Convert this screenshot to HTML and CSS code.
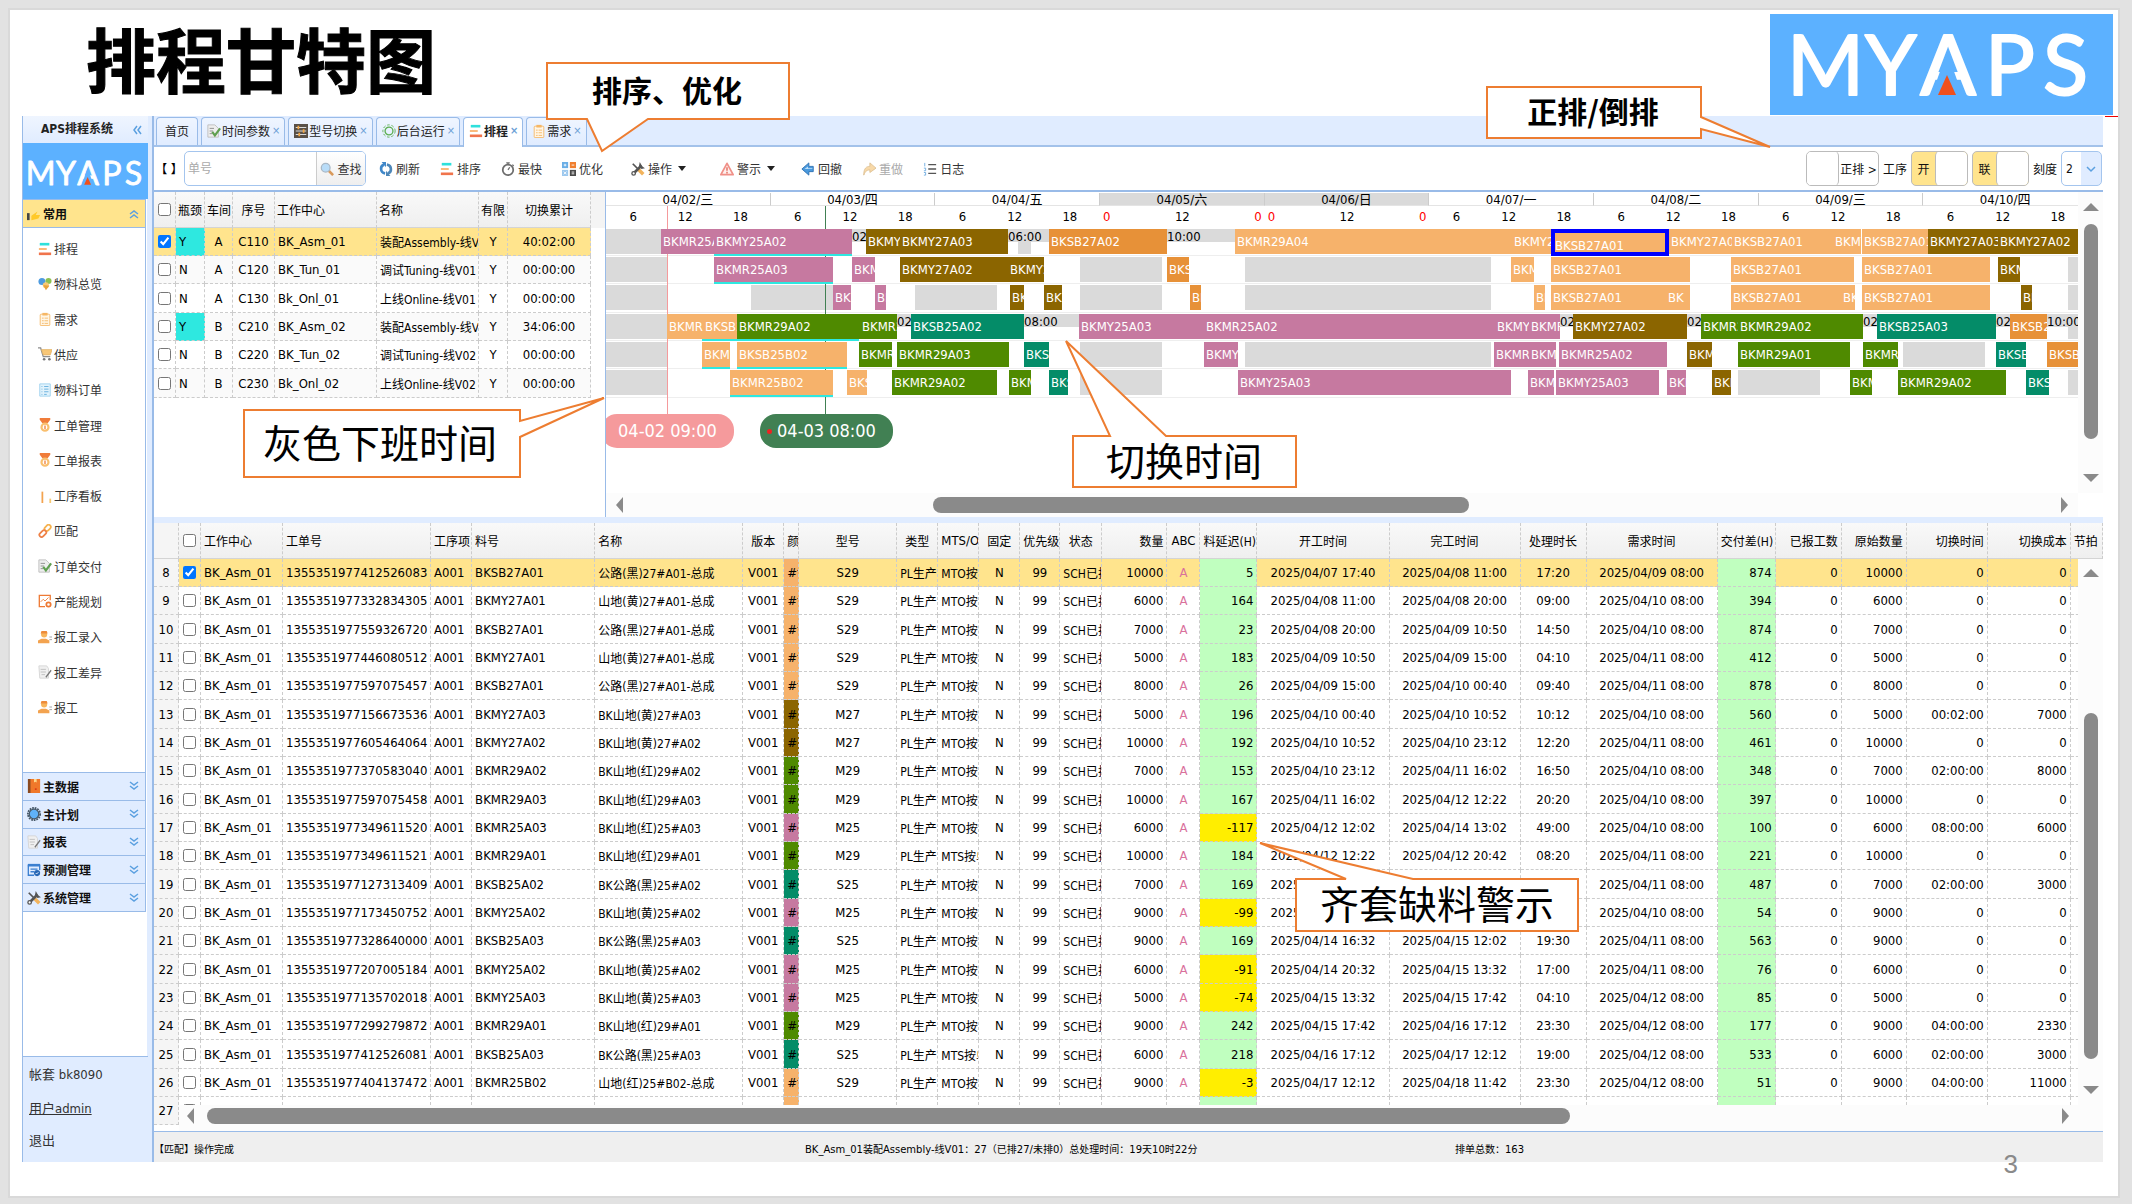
FILE: index.html
```html
<!DOCTYPE html>
<html lang="zh-CN">
<head>
    <meta charset="UTF-8">
    <title>排程甘特图</title>
    <link rel="stylesheet" href="styles.css">
</head>
<body>
<!-- 图标 -->
<svg class="sprite" width="0" height="0">
    <symbol id="i-sched" viewBox="0 0 16 16"><path d="M2 1h11v3H2z" fill="#2ee0dc"/><path d="M1 7h9v2H1z" fill="#f9b06a"/><path d="M1 12h14v3H1z" fill="#f0744c"/></symbol>
    <symbol id="i-over" viewBox="0 0 16 16"><circle cx="4.500" cy="5" r="4" fill="#4d9be0"/><circle cx="12" cy="4.500" r="3.500" fill="#8cc152"/><circle cx="9" cy="9.500" r="3.500" fill="#f7c873"/><path d="M6 9l3 6 4-5z" fill="#e8a33d"/></symbol>
    <symbol id="i-clip" viewBox="0 0 16 16"><rect x="2.500" y="2.500" width="11" height="13" rx="1" fill="#fff6e6" stroke="#f6b765"/><path d="M5 1h6v3H5z" fill="#f6b765"/><path d="M4.500 7h2m1 0h4m-7 3h2m1 0h4m-7 3h2m1 0h4" stroke="#f6b765" fill="none"/></symbol>
    <symbol id="i-cart" viewBox="0 0 16 16"><path d="M0 1h3l3 10h8" fill="none" stroke="#8d8d8d" stroke-width="1.500"/><path d="M4 3h12l-2 6H6z" fill="#f8c777" stroke="#e5b568"/><circle cx="7" cy="14" r="1.500" fill="#777"/><circle cx="13" cy="14" r="1.500" fill="#777"/></symbol>
    <symbol id="i-doc" viewBox="0 0 16 16"><path d="M2 1h12v14H2z" fill="#e2f3fc" stroke="#9ad0ee"/><path d="M4 4h1m2 0h5M4 7h1m2 0h5M4 10h1m2 0h5M4 13h1m2 0h3" stroke="#5fabdc"/></symbol>
    <symbol id="i-medal" viewBox="0 0 16 16"><path d="M2 0h12v2l-3 4H5L2 2z" fill="#f07c3a"/><circle cx="8" cy="10.500" r="4" fill="#fff" stroke="#f9bf6e" stroke-width="2.500"/><path d="M8 8.500v4" stroke="#f07c3a" stroke-width="1.500"/></symbol>
    <symbol id="i-board" viewBox="0 0 16 16"><path d="M4 3h2v13H4z" fill="#f3a34f"/><path d="M13 11h2v5h-2z" fill="#f7c873"/></symbol>
    <symbol id="i-link" viewBox="0 0 16 16"><g fill="none" stroke-width="2"><rect x="7" y="2" width="8" height="5" rx="2.500" transform="rotate(-45 11 4.500)" stroke="#f6b24e"/><rect x="1" y="8.500" width="9" height="5" rx="2.500" transform="rotate(-45 5.500 11)" stroke="#ee8147"/></g></symbol>
    <symbol id="i-check" viewBox="0 0 16 16"><path d="M1 1h8l4 4v10H1z" fill="#eee" stroke="#bbb"/><path d="M3 5h5M3 8h4M3 11h3" stroke="#888"/><path d="M6 9l3 4 6-8" fill="none" stroke="#5f9f50" stroke-width="2.500"/></symbol>
    <symbol id="i-plan" viewBox="0 0 16 16"><path d="M14 7V1.500H1.500v13H8" fill="none" stroke="#ee7a35" stroke-width="1.500"/><path d="M3 9l3-3 2 2 4-4" fill="none" stroke="#ee7a35"/><circle cx="12" cy="12" r="2.500" fill="none" stroke="#ee7a35" stroke-width="2"/></symbol>
    <symbol id="i-man" viewBox="0 0 16 16"><circle cx="7" cy="5" r="3.500" fill="#f8b55c"/><path d="M3 4h8l-1-3H4z" fill="#ee8b3a"/><path d="M0 15v-3l4-2h5l4 2v3z" fill="#f3a34f"/><path d="M13 8h3M13 11h3" stroke="#999"/></symbol>
    <symbol id="i-pen" viewBox="0 0 16 16"><path d="M1 1h9l2 3v11H2z" fill="#f0f0f0" stroke="#d4d4d4"/><path d="M3 5h6M3 8h6M4 11h4" stroke="#bbb"/><path d="M9 14l6-8" stroke="#777" stroke-width="1.500"/></symbol>
    <symbol id="i-book" viewBox="0 0 16 16"><path d="M1 0h4v16H1z" fill="#8a4a20"/><path d="M4 0h11v16H4z" fill="#f0782a"/><path d="M8 0h3v4l-1.500-1L8 4z" fill="#ffd98a"/><path d="M9 11h2v1H9z" fill="#c00"/></symbol>
    <symbol id="i-gear" viewBox="0 0 16 16"><circle cx="8" cy="8" r="7" fill="none" stroke="#455766" stroke-width="2" stroke-dasharray="2 1"/><circle cx="8" cy="8" r="5.500" fill="#5fb2f8" stroke="#455766" stroke-width="1.500"/></symbol>
    <symbol id="i-cal" viewBox="0 0 16 16"><path d="M1 1h14v3H1z" fill="#3a7fd0"/><path d="M1.500 2v12H8m6.500-6V2M4 7h8M4 10h4" fill="none" stroke="#3a7fd0" stroke-width="1.500"/><circle cx="11.500" cy="11.500" r="3.500" fill="#2767b5"/><path d="M10 11.500l1 1 2-2" stroke="#fff" fill="none"/></symbol>
    <symbol id="i-tools" viewBox="0 0 16 16"><path d="M2 2l6 6" stroke="#555" stroke-width="2"/><path d="M8 8l6 6" stroke="#f2b35c" stroke-width="4"/><path d="M12 4L4 12" stroke="#555" stroke-width="3"/><path d="M10 0L9 5l3 3 4-1-3-2z" fill="#555"/><circle cx="3" cy="13" r="2" fill="#fff" stroke="#555" stroke-width="1.500"/></symbol>
    <symbol id="i-find" viewBox="0 0 16 16"><path d="M10 10l5 5" stroke="#d99a5b" stroke-width="3"/><circle cx="6.500" cy="6.500" r="5" fill="#b8dcf8" stroke="#a9b8c6" stroke-width="1.500"/></symbol>
    <symbol id="i-fresh" viewBox="0 0 16 16"><path d="M7 13C1 12 1 4 6 3" fill="none" stroke="#3f87c9" stroke-width="3"/><path d="M3 0h5v6z" fill="#3f87c9"/><path d="M9 3c6 1 6 9 1 10" fill="none" stroke="#4d86b8" stroke-width="3"/><path d="M13 16H8v-6z" fill="#4d86b8"/></symbol>
    <symbol id="i-clock" viewBox="0 0 16 16"><circle cx="8" cy="9" r="6" fill="#fff" stroke="#6d6d6d" stroke-width="2"/><path d="M6 1h4M8 1v2M8 9l2-3M13 3l1.500 1.500" stroke="#6d6d6d" stroke-width="1.500"/></symbol>
    <symbol id="i-opt" viewBox="0 0 16 16"><path d="M0 0h7v7H0z" fill="#6aaee6"/><path d="M9 0h7v7H9z" fill="#f08030"/><path d="M0 9h7v7H0z" fill="#9cc8ee"/><path d="M9 9h7v7H9z" fill="#4a4a4a"/><path d="M3.500 2v3M2 3.500h3m6 0h3M2 11l3 3m0-3l-3 3m9-2.500h3m-3 2h3" stroke="#fff"/></symbol>
    <symbol id="i-warn" viewBox="0 0 16 16"><path d="M8 1.500L15 14.500H1z" fill="#fff0ee" stroke="#f09088" stroke-width="2" stroke-linejoin="round"/><path d="M8 6v4m0 1v2" stroke="#e0604f" stroke-width="1.500"/></symbol>
    <symbol id="i-back" viewBox="0 0 16 16"><path d="M1 8l8-7v4h5v6H9v4z" fill="#4a9ade" stroke="#2c6fb0"/><path d="M4 8l4-3v2h5v1z" fill="#bfe0fa"/></symbol>
    <symbol id="i-redo" viewBox="0 0 16 16"><path d="M2 15C2 7 5 5 9 5V1l7 6-7 5V9C6 9 4 10 2 15z" fill="#f8d9a8" stroke="#ddc094"/></symbol>
    <symbol id="i-log" viewBox="0 0 16 16"><path d="M6 3h9M6 8h9M6 13h9" stroke="#555" stroke-width="1.500"/><path d="M2 1v4M1 7h2v3H1m0 2h2v3H1" stroke="#69a9e0" fill="none"/></symbol>
    <symbol id="i-slide" viewBox="0 0 16 16"><path d="M0 0h16v16H0z" fill="#585048"/><path d="M2 4h12M2 8h12M2 12h12" stroke="#eee"/><path d="M4 2h2v4H4zm6 4h2v4h-2zm-5 4h2v4H5z" fill="#f5a742"/></symbol>
    <symbol id="i-run" viewBox="0 0 16 16"><circle cx="8" cy="8" r="4.500" fill="none" stroke="#5aae4e" stroke-width="1.500"/><circle cx="8" cy="8" r="7" fill="none" stroke="#5aae4e" stroke-dasharray="3 2"/></symbol>
    <symbol id="i-hand" viewBox="0 0 16 16"><path d="M0 7h3v8H0z" fill="#444"/><path d="M5 10l7-5-2 4h5l-2 4-8 2z" fill="#ffc928"/></symbol>
    <symbol id="i-down" viewBox="0 0 10 10"><path d="M1 1l4 3 4-3M1 5l4 3 4-3" fill="none" stroke="#5ba0e0" stroke-width="1.500"/></symbol>
    <symbol id="i-up" viewBox="0 0 10 10"><path d="M1 5l4-3 4 3M1 9l4-3 4 3" fill="none" stroke="#5ba0e0" stroke-width="1.500"/></symbol>
    <symbol id="i-left" viewBox="0 0 10 10"><path d="M5 1L2 5l3 4M9 1L6 5l3 4" fill="none" stroke="#5ba0e0" stroke-width="1.500"/></symbol>
    <symbol id="i-logo" viewBox="0 0 343 101">
        <text class="logo-text" y="81" x="17 95 150 215 273">MYAPS</text>
        <path d="M177 38l-14 39h28z" fill="#5cb1ff"/>
        <path d="M177 61l-9 20h18z" fill="#f0501c"/>
    </symbol>
</svg>

<div class="slide">
    <header class="top">
        <h1>排程甘特图</h1>
        <svg class="brand"><use href="#i-logo"/></svg>
    </header>

    <div class="app">
        <aside class="side">
            <div class="side-title">APS排程系统<svg class="chev"><use href="#i-left"/></svg></div>
            <svg class="side-logo" viewBox="10 0 323 101"><use href="#i-logo" width="343" height="101"/></svg>
            <nav class="menu">
                <button class="acc open"><svg class="ico"><use href="#i-hand"/></svg>常用<svg class="chev"><use href="#i-up"/></svg></button>
                <div class="links" id="links"></div>
                <div class="groups" id="groups"></div>
            </nav>
            <div class="user">
                <span>帐套 bk8090</span>
                <a href="#" class="line">用户admin</a>
                <a href="#">退出</a>
            </div>
        </aside>

        <main class="main">
            <div class="tabs">
                <button class="tab home">首页</button>
                <button class="tab"><svg class="ico"><use href="#i-check"/></svg>时间参数<i>×</i></button>
                <button class="tab"><svg class="ico"><use href="#i-slide"/></svg>型号切换<i>×</i></button>
                <button class="tab"><svg class="ico"><use href="#i-run"/></svg>后台运行<i>×</i></button>
                <button class="tab on"><svg class="ico"><use href="#i-sched"/></svg>排程<i>×</i></button>
                <button class="tab"><svg class="ico"><use href="#i-clip"/></svg>需求<i>×</i></button>
            </div>

            <div class="toolbar">
                <span class="mark">【 】</span>
                <div class="search">
                    <input type="text" placeholder="单号" aria-label="单号">
                    <button><svg class="ico"><use href="#i-find"/></svg>查找</button>
                </div>
                <div class="tools">
                    <button><svg class="ico"><use href="#i-fresh"/></svg>刷新</button>
                    <button><svg class="ico"><use href="#i-sched"/></svg>排序</button>
                    <button><svg class="ico"><use href="#i-clock"/></svg>最快</button>
                    <button><svg class="ico"><use href="#i-opt"/></svg>优化</button>
                    <button class="drop"><svg class="ico"><use href="#i-tools"/></svg>操作</button>
                    <button class="drop"><svg class="ico"><use href="#i-warn"/></svg>警示</button>
                    <button><svg class="ico"><use href="#i-back"/></svg>回撤</button>
                    <button disabled><svg class="ico"><use href="#i-redo"/></svg>重做</button>
                    <button><svg class="ico"><use href="#i-log"/></svg>日志</button>
                </div>
                <div class="opts">
                    <button class="switch wide"><b></b><span>正排 &gt;</span></button>
                    <span>工序</span>
                    <button class="switch"><span>开</span><b></b></button>
                    <button class="switch"><span>联</span><b></b></button>
                    <label for="scale">刻度</label>
                    <div class="combo">
                        <select id="scale"><option>2</option></select>
                        <svg viewBox="0 0 10 10"><path d="M1 3l4 4 4-4" fill="none" stroke="#5ba0e0" stroke-width="1.500"/></svg>
                    </div>
                </div>
            </div>

            <section class="gantt">
                <div class="centers">
                    <table id="centers">
                        <colgroup><col class="w22"><col class="w29"><col class="w28"><col class="w42"><col class="w102"><col class="w102"><col class="w29"><col class="w83"></colgroup>
                        <thead><tr><th><input type="checkbox" aria-label="全选"></th><th>瓶颈</th><th>车间</th><th>序号</th><th class="l">工作中心</th><th class="l">名称</th><th>有限</th><th>切换累计</th></tr></thead>
                        <tbody></tbody>
                    </table>
                </div>
                <div class="chart">
                    <div class="canvas">
                        <div class="days" id="days"></div>
                        <div class="lanes" id="lanes"></div>
                        <div class="stem pink"></div>
                        <div class="stem green"></div>
                        <div class="pill pink">04-02 09:00</div>
                        <div class="pill green">04-03 08:00</div>
                    </div>
                    <div class="hbar"><i class="al"></i><div class="track"><div class="thumb"></div></div><i class="ar"></i></div>
                </div>
                <div class="vbar"><i class="au"></i><div class="track"><div class="thumb"></div></div><i class="ad"></i></div>
            </section>

            <section class="orders">
                <table id="orders">
                    <colgroup></colgroup>
                    <thead><tr></tr></thead>
                    <tbody></tbody>
                </table>
                <div class="vbar"><i class="au"></i><div class="track"><div class="thumb"></div></div><i class="ad"></i></div>
                <div class="hbar"><i class="al"></i><div class="track"><div class="thumb"></div></div><i class="ar"></i></div>
            </section>

            <footer class="status">
                <span>【匹配】操作完成</span>
                <span>BK_Asm_01装配Assembly-线V01：27（已排27/未排0）总处理时间：19天10时22分</span>
                <span>排单总数：163</span>
            </footer>
        </main>
    </div>
    <div class="redline"></div>
    <div class="page-no">3</div>

    <!-- 标注 -->
    <svg class="notes">
        <g class="shape">
            <path d="M537 53h242v56H638L592 141 577 109H537z"/>
            <path d="M1477 77h214v30l69 30-69-18v9h-214z"/>
            <path d="M234 400h276v11l84-23-84 39v40H234z"/>
            <path d="M1063 426h37l-44-95 100 95h130v51h-223z"/>
            <path d="M1286 869h50l-86-36 153 36h165v52h-282z"/>
        </g>
        <g class="small">
            <text x="657" y="92">排序、优化</text>
            <text x="1583" y="113">正排/倒排</text>
        </g>
        <g class="large">
            <text x="370" y="448">灰色下班时间</text>
            <text x="1174" y="466">切换时间</text>
            <text x="1427" y="909">齐套缺料警示</text>
        </g>
    </svg>
</div>
<script src="script.js"></script>
</body>
</html>
```

FILE: styles.css
```css
*{margin: 0;padding: 0;box-sizing: border-box;}
body{padding: 10px 14px 8px 10px;background: #e2e2e2;font: 13px "DejaVu Sans Condensed","Noto Sans","Noto Sans CJK SC",sans-serif;color: #000;}
button,input,select{font: inherit;color: inherit;background: none;border: 0;}
a{color: inherit;text-decoration: none;}
i{font-style: normal;}
table{border-collapse: separate;border-spacing: 0;table-layout: fixed;width: 100%;}
.sprite{position: absolute;}
.ico{width: 14px;height: 14px;flex: none;}
.chev{width: 10px;height: 10px;flex: none;}

.slide{position: relative;min-height: calc(100vh - 18px);background: #fff;box-shadow: 0 0 0 2px #d9d9d9;}
.top{height: 106px;display: flex;justify-content: space-between;padding: 4px 5px 0 76px;}
.top h1{font-family: "Noto Sans CJK SC",sans-serif;font-size: 70px;line-height: 88px;font-weight: bold;-webkit-text-stroke: 1px #000;}
.brand{width: 343px;height: 101px;background: #5cb1ff;}
.logo-text{font-family: Lato,sans-serif;font-size: 83px;fill: #fff;stroke: #fff;stroke-width: 2px;stroke-linejoin: round;}
.redline{position: absolute;right: 0;top: 106px;width: 13px;height: 1px;background: #e00;}
.page-no{position: absolute;right: 100px;bottom: 16px;font: 26px/32px "Liberation Sans",sans-serif;color: #8a8a8a;}

.app{margin: 0 15px 0 12px;display: grid;grid-template-columns: 130px 1fr;background: #e0ecff;}

/* 左侧菜单 */
.side{display: flex;flex-direction: column;width: 126px;border-left: 1px solid #99bbe8;font-size: 12px;color: #333;}
.side-title{height: 27px;line-height: 27px;padding: 0 6px 0 18px;font-weight: bold;color: #222;background: linear-gradient(#eff5ff,#e0ecff);display: flex;align-items: center;justify-content: space-between;}
.side-logo{width: 125px;height: 56px;padding-top: 4px;background: #5cb1ff;}
.menu{flex: 1;background: #fff;margin-right: 1px;}
.acc{display: flex;align-items: center;width: 123px;padding: 0 6px 0 4px;gap: 2px;font-weight: bold;color: #111;background: #e0ecff;border: solid #99bbe8;border-width: 0 1px 1px 0;}
.acc .chev{margin-left: auto;}
.acc.open{height: 29px;background: #ffe48d;border-top-width: 1px;}
.links{width: 123px;height: 545px;padding: 3px 0 47px;display: grid;grid-auto-rows: 1fr;border: solid #99bbe8;border-width: 0 1px 1px 0;}
.links a{display: flex;align-items: center;gap: 2px;padding-left: 15px;}
.groups{height: 139px;display: grid;grid-auto-rows: 1fr;}
.user{height: 106px;border-top: 1px solid #99bbe8;padding: 0 0 8px 6px;display: grid;grid-template-rows: 33px 34px 1fr;align-items: center;font-size: 13px;}
.user .line{text-decoration: underline;}

.main{border-left: 2px solid #99bbe8;min-width: 0;}
.tabs{height: 31px;border-bottom: 2px solid #a3c2ea;display: flex;align-items: flex-end;gap: 3px;padding-left: 2px;}
.tab{height: 28px;display: flex;align-items: center;gap: 1px;padding: 0 4px 2px 5px;font-size: 12px;color: #222;border: 1px solid #99bbe8;border-bottom: 0;border-radius: 4px 4px 0 0;background: linear-gradient(#eff5ff,#e0ecff);}
.tab.home{padding: 0 8px 2px;}
.tab i{color: #6b9fd6;font-size: 11px;padding-left: 1px;}
.tab.on{height: 30px;padding-bottom: 4px;margin-bottom: -2px;background: #fff;font-weight: bold;}

.toolbar{height: 45px;border-bottom: 2px solid #99bbe8;background: #fff;display: flex;align-items: center;font-size: 12px;color: #333;}
.toolbar button{display: flex;align-items: center;gap: 3px;}
.mark{width: 30px;text-align: center;white-space: nowrap;color: #000;}
.search{display: flex;width: 182px;height: 35px;border: 1px solid #a4c5ee;border-radius: 5px;overflow: hidden;}
.search input{width: 131px;padding-left: 3px;}
.search input::placeholder{color: #aaa;}
.search button{flex: 1;justify-content: center;background: linear-gradient(#fff,#eee);border-left: 1px solid #ccc;}
.tools{display: flex;gap: 20px;padding-left: 13px;}
.tools .drop{margin: 0 6px 0 8px;}
.drop:after{content: "";border: 4px solid transparent;border-top: 5px solid #222;border-bottom: 0;margin-left: 3px;}
.tools button:disabled{color: #aaa;}
.opts{margin-left: auto;display: flex;align-items: center;gap: 4px;padding-right: 1px;color: #111;}
.toolbar .switch{width: 57px;height: 35px;border: 1px solid #bbb;border-radius: 5px;gap: 0;overflow: hidden;background: #ffe48d;}
.switch span{flex: 1;text-align: center;white-space: nowrap;}
.switch b{width: 32px;height: 35px;background: #fff;border-left: 1px solid #bbb;border-radius: 5px;}
.toolbar .wide{width: 73px;background: #fff;}
.wide b{border: 0;border-right: 1px solid #bbb;}
.combo{position: relative;width: 41px;height: 35px;border: 1px solid #a4c5ee;border-radius: 5px;overflow: hidden;background: linear-gradient(90deg,#fff 19px,#e0ecff 19px);}
.combo select{width: 100%;height: 100%;padding-left: 4px;appearance: none;}
.combo svg{position: absolute;right: 5px;top: 12px;width: 10px;height: 10px;pointer-events: none;}

/* 表格公共 */
th,td{overflow: hidden;white-space: nowrap;padding: 0 3px;border: dashed #ccc;border-width: 0 1px 1px 0;text-align: center;}
th{height: 36px;font-size: 12px;font-weight: normal;background: linear-gradient(#f9f9f9,#efefef);border-bottom: 1px solid #d4d4d4;}
tbody tr{height: 28px;}
tbody tr:nth-child(3n){height: 29px;}
tr.sel td{background: #ffe48d;}
.l{text-align: left;}
.r{text-align: right;}
.cn{font-size: 12px;}
input[type=checkbox]{width: 13px;height: 13px;display: block;margin: 0 auto;}
th:has(input),td:has(input){padding: 0;}

/* 甘特图 */
.gantt{height: 325px;display: grid;grid-template-columns: 452px 1fr 25px;background: #fff;overflow: hidden;}
.centers{border-right: 1px solid #99bbe8;background: linear-gradient(#f4f4f4 36px,#fff 36px);}
.centers table{width: 437px;}
.centers th{padding: 0 2px;}
.centers tbody tr:nth-child(even) td{background: #fafafa;}
.centers tbody tr td.neck{background: #2ee8e0;}
.w22{width: 22px;}
.w28{width: 28px;}
.w29{width: 29px;}
.w42{width: 42px;}
.w83{width: 83px;}
.w102{width: 102px;}
.chart{display: flex;flex-direction: column;justify-content: space-between;overflow: hidden;min-width: 0;}
.canvas{position: relative;height: 256px;margin-right: -10px;}
.days{display: grid;grid-template-columns: repeat(9,1fr);height: 36px;padding-top: 1px;text-align: center;}
.date{height: 13px;line-height: 13px;border-right: 1px solid #ccc;border-bottom: 1px solid #e4e4e4;}
.rest .date{background: #dadada;}
.hours{display: grid;grid-template-columns: 54fr 50fr 60fr;line-height: 22px;}
.rest .hours{display: flex;justify-content: space-between;padding: 0 3px;}
.red{color: #f00;}
.lane{position: relative;height: 28px;border-bottom: 1px solid #eee;}
.lane:nth-child(3n){height: 29px;}
.bar{position: absolute;top: 1px;height: 25px;line-height: 25px;padding-left: 2px;color: #fff;white-space: nowrap;overflow: hidden;z-index: 2;}
.off{background: #dadada;z-index: 0;}
.swap{height: 13px;line-height: 15px;padding: 0;color: #000;background: #dadada;}
.under{top: 26px;height: 2px;background: #2ee8e0;}
.p{background: #c679a0;}
.b{background: #8b6500;}
.o{background: #e79138;}
.y,tr.sel td.y{background: #f6b26b;}
.g{background: #4f8a00;}
.t{background: #048c68;}
.pick{height: 27px;line-height: 26px;border: 4px solid #00f;padding: 0;z-index: 3;}
.stem{position: absolute;top: 14px;height: 208px;width: 1px;z-index: 1;}
.pill{position: absolute;top: 222px;width: 133px;height: 34px;line-height: 34px;border-radius: 16px;text-align: center;font-size: 18px;color: #fff;}
.stem.pink{left: 61px;background: #f59a9c;}
.stem.green{left: 219px;background: #418053;}
.pill.pink{left: -5px;background: #f59a9c;}
.pill.green{left: 154px;background: #418053;}
.pill.green:before{content: "";position: absolute;left: 7px;top: 15px;width: 5px;height: 5px;border-radius: 50%;background: #e22;}

/* 滚动条 */
.hbar,.vbar{display: flex;align-items: center;background: #fcfcfc;}
.hbar{height: 24px;padding: 0 10px;gap: 13px;}
.vbar{flex-direction: column;padding: 11px 0;gap: 13px;}
.track{flex: 1;}
.hbar .thumb{height: 16px;border-radius: 8px;background: #8a8a8a;}
.vbar .thumb{width: 14px;border-radius: 8px;background: #8a8a8a;}
.al,.ar,.au,.ad{border: 8px solid transparent;}
.al{border-width: 8px 7px 8px 0;border-right-color: #8a8a8a;}
.ar{border-width: 8px 0 8px 7px;border-left-color: #8a8a8a;}
.au{border-width: 0 8px 8px;border-bottom-color: #8a8a8a;}
.ad{border-width: 8px 8px 0;border-top-color: #8a8a8a;}
.chart .thumb{width: 38%;margin-left: 21%;}
.gantt .vbar{height: 301px;}
.gantt .vbar .thumb{height: 215px;}

/* 工单表 */
.orders{position: relative;height: 615px;border-top: 6px solid #e0ecff;overflow: hidden;background: #fff;border-bottom: 1px solid #99bbe8;}
.orders .no{background: #f5f5f5;padding: 0;}
.orders .abc{color: #d9709c;}
.orders tbody .late{background: #c0ffbf;}
.orders tbody .lack{background: #ffee00;}
.orders .big{font-size: 13px;}
.orders .vbar{position: absolute;right: 0;top: 36px;bottom: 26px;width: 25px;padding: 10px 0 11px;}
.orders .vbar .track{display: flex;align-items: flex-end;padding-bottom: 14px;}
.orders .vbar .thumb{height: 346px;}
.orders .hbar{position: absolute;left: 25px;right: 0;bottom: 0;height: 26px;padding: 0 34px 4px 8px;}
.orders .hbar .thumb{width: 74%;}
.status{height: 30px;display: grid;grid-template-columns: 651px 650px 1fr;align-items: center;padding-top: 2px;background: #efefef;font: 10px "DejaVu Sans","Noto Sans CJK SC",sans-serif;}

/* 标注框 */
.notes{position: absolute;left: 0;top: 0;width: 100%;height: 100%;overflow: visible;pointer-events: none;z-index: 9;}
.shape{fill: #fff;stroke: #ed7d31;stroke-width: 2px;}
.notes text{font-family: "Noto Sans CJK SC",sans-serif;text-anchor: middle;}
.small{font-size: 30px;font-weight: bold;}
.large{font-size: 39px;}
```

FILE: script.js
```js
function $(id){
    return document.getElementById(id);
}
function icon(name, cls){
    return '<svg class="' + (cls || 'ico') + '"><use href="#i-' + name + '"/></svg>';
}

// 菜单
var links = [['sched','排程'],['over','物料总览'],['clip','需求'],['cart','供应'],['doc','物料订单'],['medal','工单管理'],['medal','工单报表'],
    ['board','工序看板'],['link','匹配'],['check','订单交付'],['plan','产能规划'],['man','报工录入'],['pen','报工差异'],['man','报工']];
$('links').innerHTML = links.map(function(m){
    return '<a href="#">' + icon(m[0]) + m[1] + '</a>';
}).join('');
var groups = [['book','主数据'],['gear','主计划'],['pen','报表'],['cal','预测管理'],['tools','系统管理']];
$('groups').innerHTML = groups.map(function(m){
    return '<button class="acc">' + icon(m[0]) + m[1] + icon('down','chev') + '</button>';
}).join('');

// 工作中心
var centers = [
    ['Y','A','C110','BK_Asm_01','装配Assembly-线V01','40:02:00'],
    ['N','A','C120','BK_Tun_01','调试Tuning-线V01','00:00:00'],
    ['N','A','C130','Bk_Onl_01','上线Online-线V01','00:00:00'],
    ['Y','B','C210','BK_Asm_02','装配Assembly-线V02','34:06:00'],
    ['N','B','C220','BK_Tun_02','调试Tuning-线V02','00:00:00'],
    ['N','B','C230','Bk_Onl_02','上线Online-线V02','00:00:00']
];
$('centers').tBodies[0].innerHTML = centers.map(function(c, i){
    return '<tr' + (i === 0 ? ' class="sel"' : '') + '><td><input type="checkbox" aria-label="' + c[3] + '"' + (i === 0 ? ' checked' : '') + '></td>' +
        '<td class="l' + (c[0] === 'Y' ? ' neck' : '') + '">' + c[0] + '</td><td>' + c[1] + '</td><td>' + c[2] + '</td><td class="l">' + c[3] +
        '</td><td class="l cn">' + c[4] + '</td><td>Y</td><td>' + c[5] + '</td></tr>';
}).join('');

// 日期刻度
var days = ['04/02/三','04/03/四','04/04/五','04/05/六','04/06/日','04/07/一','04/08/二','04/09/三','04/10/四'];
$('days').innerHTML = days.map(function(d){
    var rest = /[六日]/.test(d);
    return '<div class="' + (rest ? 'rest' : 'work') + '"><div class="date">' + d + '</div><div class="hours">' +
        (rest ? '<span class="red">0</span><span>12</span><span class="red">0</span>' : '<span>6</span><span>12</span><span>18</span>') + '</div></div>';
}).join('');

// 任务条: [类型, 开始, 结束, 文字]
var START = 606, SPAN = 1482;
var lanes = [
    [['off',606,661],['p',661,714,'BKMR25A03'],['p',714,852,'BKMY25A02'],['under',714,852],['swap',852,866,'02:00'],['b',866,900,'BKMY27A01'],['b',900,1008,'BKMY27A03'],
     ['swap',1008,1049,'06:00'],['off',1018,1031],['o',1049,1167,'BKSB27A02'],['swap',1167,1235,'10:00'],['y',1235,1512,'BKMR29A04'],['y',1512,1551,'BKMY27A01'],
     ['y pick',1551,1669,'BKSB27A01'],['y',1669,1732,'BKMY27A01'],['y',1732,1833,'BKSB27A01'],['y',1833,1861,'BKMY27A01'],['y',1862,1928,'BKSB27A01'],
     ['b',1928,1998,'BKMY27A03'],['b',1998,2078,'BKMY27A02']],
    [['off',606,667],['p',714,833,'BKMR25A03'],['under',714,833],['p',852,875,'BKMY25A02'],['b',900,1008,'BKMY27A02'],['b',1008,1044,'BKMY27A03'],['off',1080,1162],
     ['o',1167,1189,'BKSB27A02'],['off',1245,1491],['y',1511,1534,'BKMR29A04'],['y',1551,1690,'BKSB27A01'],['y',1731,1854,'BKSB27A01'],['y',1862,1990,'BKSB27A01'],
     ['b',1998,2020,'BKMY27A03'],['off',2068,2088]],
    [['off',606,667],['off',751,833],['p',833,851,'BKMR25A03'],['p',875,886,'BKMY25A02'],['off',915,997],['b',1010,1024,'BKMY27A02'],['b',1044,1062,'BKMY27A03'],
     ['off',1080,1162],['o',1190,1201,'BKSB27A02'],['off',1245,1491],['y',1534,1545,'BKMR29A04'],['y',1551,1666,'BKSB27A01'],['y',1666,1690,'BK'],
     ['y',1731,1841,'BKSB27A01'],['y',1841,1855,'BKMY27A01'],['y',1862,1990,'BKSB27A01'],['b',2021,2032,'BKMY27A03'],['off',2068,2088]],
    [['off',606,667],['y',667,703,'BKMR25B02'],['y',703,737,'BKSB25B02'],['g',737,860,'BKMR29A02'],['g',860,897,'BKMR29A03'],['under',702,859],['swap',897,911,'02:00'],
     ['t',911,1024,'BKSB25A02'],['swap',1024,1079,'08:00'],['p',1079,1204,'BKMY25A03'],['p',1204,1495,'BKMR25A02'],['p',1495,1529,'BKMY25A03'],['p',1529,1560,'BKMR25A02'],
     ['swap',1560,1573,'02:00'],['b',1573,1687,'BKMY27A02'],['swap',1687,1701,'02:00'],['g',1701,1738,'BKMR29A01'],['g',1738,1863,'BKMR29A02'],['swap',1863,1877,'02:00'],
     ['t',1877,1996,'BKSB25A03'],['swap',1996,2010,'02:00'],['o',2010,2047,'BKSB27A02'],['swap',2047,2088,'10:00'],['off',2068,2088]],
    [['off',606,667],['y',702,730,'BKMR25B02'],['under',702,730],['y',737,847,'BKSB25B02'],['under',737,847],['g',859,892,'BKMR29A02'],['g',897,1009,'BKMR29A03'],
     ['t',1024,1049,'BKSB25A02'],['off',1080,1162],['p',1204,1238,'BKMY25A03'],['off',1245,1491],['p',1494,1529,'BKMR25A02'],['p',1529,1556,'BKMY25A03'],
     ['p',1559,1667,'BKMR25A02'],['b',1687,1712,'BKMY27A02'],['g',1738,1850,'BKMR29A01'],['g',1863,1898,'BKMR29A02'],['off',1903,1985],['t',1996,2026,'BKSB25A03'],['o',2047,2088,'BKSB27A02']],
    [['off',606,667],['y',730,833,'BKMR25B02'],['under',730,833],['y',847,867,'BKSB25B02'],['g',892,997,'BKMR29A02'],['g',1009,1031,'BKMR29A03'],['t',1049,1068,'BKSB25A02'],
     ['off',1080,1162],['p',1238,1511,'BKMY25A03'],['p',1528,1554,'BKMR25A02'],['p',1556,1659,'BKMY25A03'],['p',1667,1686,'BKMR25A02'],['b',1712,1731,'BKMY27A02'],
     ['off',1738,1820],['g',1850,1872,'BKMR29A01'],['g',1898,2006,'BKMR29A02'],['t',2026,2049,'BKSB25A03'],['off',2068,2088]]
];
$('lanes').innerHTML = lanes.map(function(lane){
    return '<div class="lane">' + lane.map(function(b){
        return '<div class="bar ' + b[0] + '" style="left:' + (b[1] - START) / SPAN * 100 + '%;width:' + (b[2] - b[1]) / SPAN * 100 + '%">' + (b[3] || '') + '</div>';
    }).join('') + '</div>';
}).join('');

// 工单列: [标题, 宽度, 单元格样式, 标题样式]
var cols = [['',25,'no'],['',22,''],['工作中心',82,'l'],['工单号',148,'l'],['工序项目',41,'l'],['料号',123,'l'],['名称',148,'l cn'],['版本',41,''],['颜色',15,'l'],
    ['型号',98,''],['类型',41,'l cn',''],['MTS/O',41,'l cn','l big'],['固定',41,''],['优先级',40,''],['状态',42,'l cn',''],['数量',65,'r'],['ABC',33,'abc','big'],['料延迟(H)',57,'r late'],
    ['开工时间',132,''],['完工时间',131,''],['处理时长',66,''],['需求时间',131,''],['交付差(H)',58,'r late'],['已报工数',66,'r'],['原始数量',65,'r'],['切换时间',81,'r'],['切换成本',83,'r'],['节拍',32,'l']];
var paint = {y: '#f6b26b', b: '#8b6500', g: '#4f8a00', p: '#c679a0', t: '#048c68'};
var orders = [
    ['412526083','BKSB27A01','公路(黑)27#A01-总成','y','S29','MTO',10000,5,'04/07 17:40','04/08 11:00','17:20','09',874,0,0],
    ['332834305','BKMY27A01','山地(黄)27#A01-总成','y','S29','MTO',6000,164,'04/08 11:00','04/08 20:00','09:00','10',394,0,0],
    ['559326720','BKSB27A01','公路(黑)27#A01-总成','y','S29','MTO',7000,23,'04/08 20:00','04/09 10:50','14:50','10',874,0,0],
    ['446080512','BKMY27A01','山地(黄)27#A01-总成','y','S29','MTO',5000,183,'04/09 10:50','04/09 15:00','04:10','11',412,0,0],
    ['597075457','BKSB27A01','公路(黑)27#A01-总成','y','S29','MTO',8000,26,'04/09 15:00','04/10 00:40','09:40','11',878,0,0],
    ['156673536','BKMY27A03','BK山地(黄)27#A03','b','M27','MTO',5000,196,'04/10 00:40','04/10 10:52','10:12','10',560,'00:02:00',7000],
    ['605464064','BKMY27A02','BK山地(黄)27#A02','b','M27','MTO',10000,192,'04/10 10:52','04/10 23:12','12:20','11',461,0,0],
    ['370583040','BKMR29A02','BK山地(红)29#A02','g','M29','MTO',7000,153,'04/10 23:12','04/11 16:02','16:50','10',348,'02:00:00',8000],
    ['597075458','BKMR29A03','BK山地(红)29#A03','g','M29','MTO',10000,167,'04/11 16:02','04/12 12:22','20:20','10',397,0,0],
    ['349611520','BKMR25A03','BK山地(红)25#A03','p','M25','MTO',6000,-117,'04/12 12:02','04/14 13:02','49:00','10',100,'08:00:00',6000],
    ['349611521','BKMR29A01','BK山地(红)29#A01','g','M29','MTS',10000,184,'04/12 12:22','04/12 20:42','08:20','11',221,0,0],
    ['127313409','BKSB25A02','BK公路(黑)25#A02','t','S25','MTO',7000,169,'04/12 20:42','04/13 12:22','15:40','11',487,'02:00:00',3000],
    ['173450752','BKMY25A02','BK山地(黄)25#A02','p','M25','MTO',9000,-99,'04/13 12:22','04/14 16:32','28:10','10',54,0,0],
    ['328640000','BKSB25A03','BK公路(黑)25#A03','t','S25','MTO',9000,169,'04/14 16:32','04/15 12:02','19:30','11',563,0,0],
    ['207005184','BKMY25A02','BK山地(黄)25#A02','p','M25','MTO',6000,-91,'04/14 20:32','04/15 13:32','17:00','11',76,0,0],
    ['135702018','BKMY25A03','BK山地(黄)25#A03','p','M25','MTO',5000,-74,'04/15 13:32','04/15 17:42','04:10','12',85,0,0],
    ['299279872','BKMR29A01','BK山地(红)29#A01','g','M29','MTO',9000,242,'04/15 17:42','04/16 17:12','23:30','12',177,'04:00:00',2330],
    ['412526081','BKSB25A03','BK公路(黑)25#A03','t','S25','MTS',6000,218,'04/16 17:12','04/17 12:12','19:00','12',533,'02:00:00',3000],
    ['404137472','BKMR25B02','山地(红)25#B02-总成','y','S29','MTO',9000,-3,'04/17 12:12','04/18 11:42','23:30','12',51,'04:00:00',11000]
];
var box = '<input type="checkbox" aria-label="选择">';
var table = $('orders');
table.querySelector('colgroup').innerHTML = cols.map(function(c){
    return '<col style="width:' + c[1] + 'px">';
}).join('');
table.tHead.rows[0].innerHTML = cols.map(function(c, i){
    return '<th class="' + (c.length > 3 ? c[3] : c[2]) + '">' + (i === 1 ? box : c[0]) + '</th>';
}).join('');
var body = orders.map(function(o, i){
    var cells = [i + 8, i ? box : box.replace('>', ' checked>'), 'BK_Asm_01', '1355351977' + o[0], 'A001', o[1], o[2], 'V001', paint[o[3]], o[4], 'PL生产', o[5] + '按单',
        'N', 99, 'SCH已排', o[6], 'A', o[7], '2025/' + o[8], '2025/' + o[9], o[10], '2025/04/' + o[11] + ' 08:00', o[12], 0, o[6], o[13], o[14], ''];
    return '<tr' + (i ? '' : ' class="sel"') + '>' + cells.map(function(v, k){
        var cls = cols[k][2];
        if(k === 8) cls += ' ' + o[3];
        if(v < 0) cls += ' lack';
        return '<td class="' + cls + '">' + v + '</td>';
    }).join('') + '</tr>';
}).join('');
// 最后一行只露出一部分
body += '<tr>' + cols.map(function(c, k){
    return '<td class="' + c[2] + (k === 8 ? ' y' : '') + '">' + (k === 0 ? 27 : k === 1 ? box : '') + '</td>';
}).join('') + '</tr>';
table.tBodies[0].innerHTML = body;
```
